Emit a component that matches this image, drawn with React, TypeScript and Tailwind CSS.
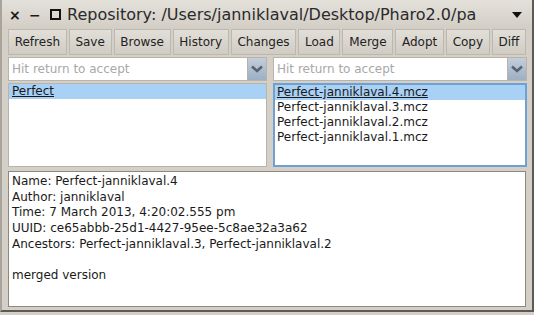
import React from "react"

const buttons = ["Refresh", "Save", "Browse", "History", "Changes", "Load", "Merge", "Adopt", "Copy", "Diff"]

const versions = [
  "Perfect-janniklaval.4.mcz",
  "Perfect-janniklaval.3.mcz",
  "Perfect-janniklaval.2.mcz",
  "Perfect-janniklaval.1.mcz",
]

const info = [
  "Name: Perfect-janniklaval.4",
  "Author: janniklaval",
  "Time: 7 March 2013, 4:20:02.555 pm",
  "UUID: ce65abbb-25d1-4427-95ee-5c8ae32a3a62",
  "Ancestors: Perfect-janniklaval.3, Perfect-janniklaval.2",
  "",
  "merged version",
]

function Chevron() {
  return (
    <svg width="12" height="8" viewBox="0 0 12 8">
      <path d="M1 1.5 L6 6 L11 1.5" fill="none" stroke="#5a6470" strokeWidth="2.6" />
    </svg>
  )
}

function SearchField({ width }: { width: string }) {
  return (
    <div className={`flex h-[24px] ${width}`}>
      <div className="flex flex-1 items-center border border-[#b8b4ac] bg-white pl-[3px] text-[12px] text-[#a8a8a8]">
        Hit return to accept
      </div>
      <div className="flex w-[19px] items-center justify-center border-y border-r border-[#b8b4ac] bg-gradient-to-b from-[#c4cedb] to-[#9dafc3]">
        <Chevron />
      </div>
    </div>
  )
}

export default function App() {
  return (
    <div
      className="h-[315px] w-[534px] overflow-hidden bg-[#d4d0c8] text-[#1a1a1a]"
      style={{ fontFamily: '"DejaVu Sans", Verdana, sans-serif' }}
    >
      <div className="flex h-[312px] flex-col border-l-2 border-r-2 border-b-2 border-l-[#a8a49c] border-r-[#5c5a56] border-b-[#5c5a56]">
        <div className="flex h-[29px] items-center bg-gradient-to-b from-[#e4e1da] to-[#d2cec6] pl-[7px] pr-[10px]">
          <span className="w-[20px] text-[14px] font-bold leading-none">×</span>
          <span className="w-[21px] text-[14px] font-bold leading-none">−</span>
          <span className="mr-[6px] h-[11px] w-[11px] border-2 border-[#111]" />
          <span className="min-w-0 flex-1 whitespace-nowrap text-[16px] text-[#2a2a2a]">
            Repository: /Users/janniklaval/Desktop/Pharo2.0/pa
          </span>
          <svg width="10" height="6" viewBox="0 0 10 6" className="ml-[4px] shrink-0">
            <path d="M0 0 L10 0 L5 6 Z" fill="#111" />
          </svg>
        </div>

        <div className="flex h-[26px] gap-[2px] px-[6px]">
          {buttons.map((b) => (
            <div
              key={b}
              className="flex h-[26px] flex-auto items-center justify-center border border-[#bcb8b0] bg-gradient-to-b from-[#e2dfd8] to-[#d0ccc4] px-[5px] text-[12px] text-[#222]"
            >
              {b}
            </div>
          ))}
        </div>

        <div className="mt-[2px] flex gap-[6px] px-[6px]">
          <div className="flex w-[259px] flex-col gap-[2px]">
            <SearchField width="w-[259px]" />
            <div className="h-[84px] border border-[#b8b4ac] bg-white">
              <div className="h-[15px] bg-[#a9d0f5] pl-[3px] text-[12px] leading-[15px] underline">Perfect</div>
            </div>
          </div>
          <div className="flex w-[254px] flex-col gap-[2px]">
            <SearchField width="w-[254px]" />
            <div className="h-[84px] border-2 border-[#6fa0d4] bg-white">
              {versions.map((v, i) => (
                <div
                  key={v}
                  className={`h-[15px] pl-[2px] text-[12px] leading-[15px] ${i === 0 ? "bg-[#a9d0f5] underline" : ""}`}
                >
                  {v}
                </div>
              ))}
            </div>
          </div>
        </div>

        <div className="mx-[6px] mt-[4px] h-[136px] border border-[#8c8880] bg-white px-[3px] pt-[2px] text-[12px] leading-[15.7px]">
          {info.map((l, i) => (
            <div key={i} className="h-[15.7px] whitespace-nowrap">
              {l}
            </div>
          ))}
        </div>
      </div>
    </div>
  )
}
